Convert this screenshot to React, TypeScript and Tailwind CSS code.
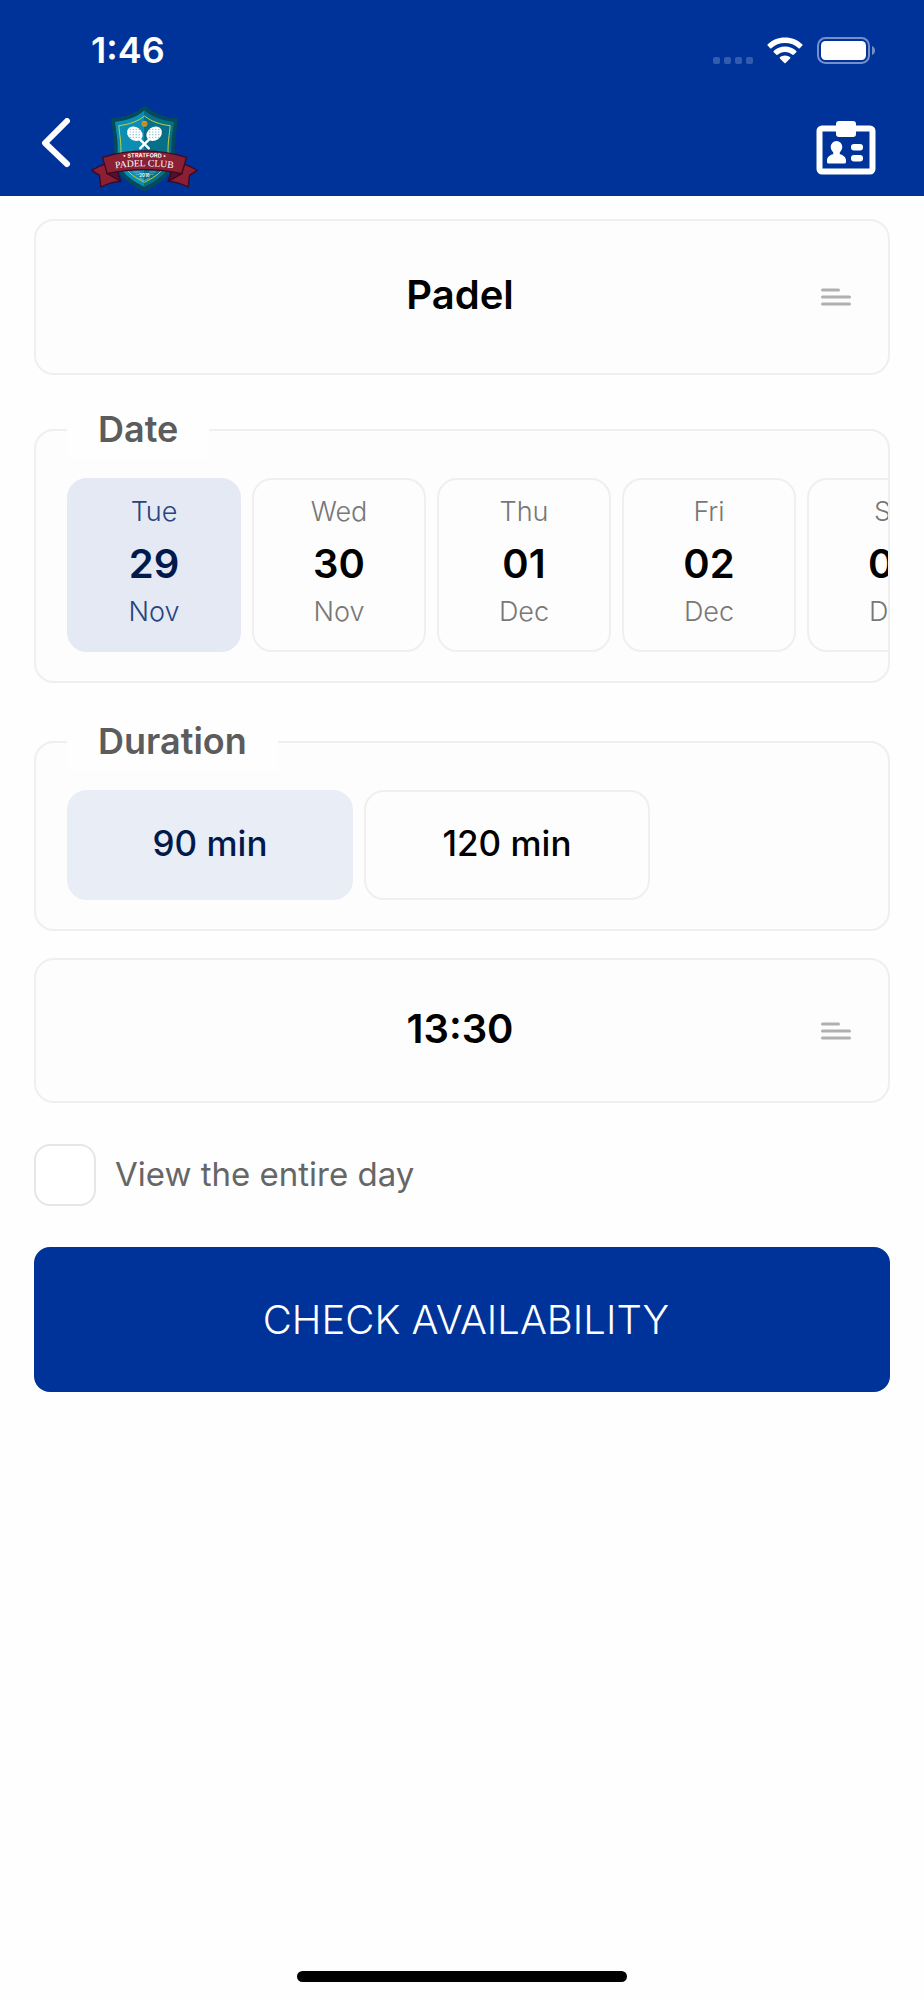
import React, { useState } from "react";
import clsx from "clsx";

const days = [
  { id: 1, weekday: "Tue", day: "29", month: "Nov" },
  { id: 2, weekday: "Wed", day: "30", month: "Nov" },
  { id: 3, weekday: "Thu", day: "01", month: "Dec" },
  { id: 4, weekday: "Fri", day: "02", month: "Dec" },
  { id: 5, weekday: "Sat", day: "03", month: "Dec" },
];

const durations = ["90 min", "120 min"];

const ClubLogo = () => (
  <svg viewBox="32 11 320 261" className="h-[87px] w-[107px]" role="img" aria-label="Stratford Padel Club">
    <path d="M192 12 C165 37 130 51 92 51 C94 88 104 112 101 160 C100 215 145 248 192 270 C239 248 284 215 283 160 C280 112 290 88 292 51 C254 51 219 37 192 12Z" fill="#034b5b" />
    <path d="M192 27 C168 48 138 59 104 61 C106 92 114 116 111 160 C110 207 150 236 192 256Z" fill="#0b8db4" />
    <path d="M192 27 C216 48 246 59 280 61 C278 92 270 116 273 160 C274 207 234 236 192 256Z" fill="#067089" />
    <path d="M192 44 C172 60 145 70 115 73 C117 100 123 125 121 160 C122 202 157 226 192 243 C227 226 262 202 263 160 C261 125 267 100 269 73 C239 70 212 60 192 44Z" fill="none" stroke="#c5cf3c" strokeWidth="3" />
    <circle cx="192" cy="67" r="9" fill="#d39a2a" />
    <path d="M185 64 q7 5 14 0 M185 71 q7 -5 14 0" stroke="#94701f" strokeWidth="1.5" fill="none" />
    <g stroke="#fff" strokeWidth="7" strokeLinecap="round">
      <path d="M178 114 L205 141" />
      <path d="M206 114 L179 141" />
    </g>
    <g fill="#fff">
      <ellipse cx="163" cy="97" rx="25" ry="20" transform="rotate(35 163 97)" />
      <ellipse cx="221" cy="97" rx="25" ry="20" transform="rotate(-35 221 97)" />
    </g>
    <g fill="#5fa9bd">
      {[0, 1, 2, 3].map((row) =>
        [0, 1, 2, 3].map((col) => (
          <React.Fragment key={`${row}-${col}`}>
            <circle cx={149 + col * 9} cy={84 + row * 8} r="1.8" />
            <circle cx={208 + col * 9} cy={84 + row * 8} r="1.8" />
          </React.Fragment>
        ))
      )}
    </g>
    <g stroke="#8fd0dc" strokeWidth="2" fill="none">
      <path d="M158 212 H178 M206 212 H226 M165 219 H177 M207 219 H219 M176 230 L192 238 L208 230" />
    </g>
    <text x="192" y="226" textAnchor="middle" fill="#e8f6f8" fontFamily="Inter, sans-serif" fontWeight="700" fontSize="13">
      2018
    </text>
    <g fill="#8b1f33" stroke="#3b0a20" strokeWidth="4" strokeLinejoin="round">
      <path d="M72 189 C58 193 45 199 34 207 L57 222 L61 257 C80 247 100 241 121 240 L104 208Z" />
      <path d="M312 189 C326 193 339 199 350 207 L327 222 L323 257 C304 247 284 241 263 240 L280 208Z" />
      <path d="M79 216 L121 240 L110 208Z" fill="#55102a" />
      <path d="M305 216 L263 240 L274 208Z" fill="#55102a" />
      <path d="M66 168 Q192 129 318 168 L304 217 Q192 193 80 217Z" />
    </g>
    <path id="club-arc-top" d="M70 178 Q192 157 314 178" fill="none" />
    <path id="club-arc-main" d="M70 206 Q192 184 314 206" fill="none" />
    <text fill="#fff" textAnchor="middle" fontFamily="Inter, sans-serif" fontWeight="700" fontSize="17">
      <textPath href="#club-arc-top" startOffset="50%">• STRATFORD •</textPath>
    </text>
    <text fill="#fff" textAnchor="middle" fontFamily="'Liberation Serif', serif" fontSize="29">
      <textPath href="#club-arc-main" startOffset="50%">PADEL CLUB</textPath>
    </text>
  </svg>
);

const StatusBar = () => (
  <div className="flex h-[100px] items-center justify-between pl-[91px] pr-12">
    <span className="text-4xl font-semibold">1:46</span>
    <div className="flex items-end gap-3.5">
      <div className="flex gap-1">
        {[0, 1, 2, 3].map((i) => (
          <span key={i} className="h-[7px] w-[7px] rounded-xs bg-[#345cae]" />
        ))}
      </div>
      <svg viewBox="0 0 36 27" className="h-[27px] w-9" fill="#fff" aria-hidden="true">
        <path d="M18 0.5 C24.9 0.5 31 3.2 35.4 7.4 Q36 8 35.4 8.6 L32.8 11.2 Q32.2 11.7 31.6 11.2 C28 7.8 23.3 5.9 18 5.9 C12.7 5.9 8 7.8 4.4 11.2 Q3.8 11.7 3.2 11.2 L0.6 8.6 Q0 8 0.6 7.4 C5 3.2 11.1 0.5 18 0.5Z" />
        <path d="M18 9.6 C22.4 9.6 26.4 11.3 29.3 14 Q29.9 14.6 29.3 15.2 L26.6 17.8 Q26.1 18.3 25.5 17.8 C23.5 16 20.9 14.9 18 14.9 C15.1 14.9 12.5 16 10.5 17.8 Q9.9 18.3 9.4 17.8 L6.7 15.2 Q6.1 14.6 6.7 14 C9.6 11.3 13.6 9.6 18 9.6Z" />
        <path d="M18 18.4 C20 18.4 21.8 19.1 23.1 20.2 Q23.7 20.8 23.1 21.4 L18.6 26 Q18 26.6 17.4 26 L12.9 21.4 Q12.3 20.8 12.9 20.2 C14.2 19.1 16 18.4 18 18.4Z" />
      </svg>
      <svg viewBox="0 0 59 27" className="h-[27px] w-[59px]" aria-hidden="true">
        <rect x="1" y="1" width="51" height="25" rx="7.5" fill="none" stroke="#7590c8" strokeWidth="2" />
        <rect x="4" y="4" width="45" height="19" rx="4.5" fill="#fff" />
        <path d="M55 9 Q58 10.5 58 13.5 Q58 16.5 55 18Z" fill="#7590c8" />
      </svg>
    </div>
  </div>
);

const NavBar = () => (
  <nav className="flex h-24 items-center justify-between pl-[41px] pr-12">
    <div className="flex items-center gap-5">
      <button type="button" aria-label="Back">
        <svg viewBox="0 0 30 60" className="h-[60px] w-[30px]" fill="none" stroke="#fff" strokeWidth="6" strokeLinecap="round" strokeLinejoin="round">
          <path d="M26 3 L4 25 L26 46" />
        </svg>
      </button>
      <ClubLogo />
    </div>
    <button type="button" aria-label="Membership card">
      <svg viewBox="0 0 60 56" className="h-14 w-[60px]" fill="#fff">
        <rect x="3.5" y="8.5" width="53" height="43" rx="2.5" fill="none" stroke="#fff" strokeWidth="6" />
        <rect x="20" y="1" width="20" height="16" rx="3" />
        <path d="M20.500 21 a5.800 5.800 0 0 1 5.800 5.800 c0 2.500 -1.300 4.200 -2.500 5.500 v2 c3.500 0.600 6.200 3 6.200 6.200 v1.500 q0 1.500 -1.500 1.500 h-16 q-1.500 0 -1.500 -1.500 v-1.500 c0 -3.200 2.700 -5.600 6.200 -6.200 v-2 c-1.200 -1.300 -2.500 -3 -2.500 -5.500 a5.800 5.800 0 0 1 5.800 -5.800Z" />
        <rect x="35" y="24" width="12" height="6.500" rx="3" />
        <rect x="35" y="35" width="12" height="6.500" rx="3" />
      </svg>
    </button>
  </nav>
);

interface PickerProps {
  label: string;
  options: string[];
  className?: string;
}

const Picker = ({ label, options, className }: PickerProps) => (
  <div className={clsx("grid items-center rounded-[20px] border-2 border-[#efefef] bg-[#fdfdfd]", className)}>
    <select
      aria-label={label}
      className="col-start-1 row-start-1 h-full w-full appearance-none bg-transparent pr-1 pb-1 text-center text-[40px] font-semibold text-black [text-align-last:center]"
    >
      {options.map((option) => (
        <option key={option}>{option}</option>
      ))}
    </select>
    <svg viewBox="0 0 30 18" className="pointer-events-none col-start-1 row-start-1 mr-[37px] h-[18px] w-[30px] justify-self-end" stroke="#b0b0b0" strokeWidth="3" strokeLinecap="round" aria-hidden="true">
      <path d="M1.500 2 H17.500 M1.500 9 H28.500 M1.500 16 H28.500" />
    </svg>
  </div>
);

interface GroupProps {
  title: string;
  children: React.ReactNode;
}

const Group = ({ title, children }: GroupProps) => (
  <fieldset className="min-w-0 rounded-[20px] border-2 border-[#efefef] bg-[#fdfdfd] pt-[18px] pb-[29px] pl-[31px]">
    <legend className="bg-[#fefefe] px-[31px] pb-0.5 text-4xl leading-[58px] font-semibold text-[#5c5c5c]">{title}</legend>
    <div className="flex gap-[11px] overflow-hidden">{children}</div>
  </fieldset>
);

const App = () => {
  const [day, setDay] = useState(1);
  const [duration, setDuration] = useState("90 min");

  return (
    <div className="flex min-h-screen flex-col bg-[#fefefe] font-['Inter','Liberation_Sans',sans-serif]">
      <header className="bg-[#003399] text-white">
        <StatusBar />
        <NavBar />
      </header>

      <main className="flex flex-col px-[34px] pt-[23px]">
        <Picker label="Sport" options={["Padel", "Tennis"]} className="mb-[25px] h-[156px]" />

        <Group title="Date">
          {days.map((item) => (
            <button
              key={item.id}
              type="button"
              aria-pressed={day === item.id}
              onClick={() => setDay(item.id)}
              className={clsx(
                "flex h-[174px] w-[174px] shrink-0 flex-col items-center rounded-[20px] border-2 pt-3 text-[27px] font-light",
                day === item.id ? "border-[#e5e9f4] bg-[#e5e9f4] text-[#264480]" : "border-[#efefef] text-[#777777]"
              )}
            >
              <span className="leading-10">{item.weekday}</span>
              <span className={clsx("text-[40px] leading-[64px] font-semibold", day === item.id ? "text-[#001a4d]" : "text-black")}>
                {item.day}
              </span>
              <span className="leading-8">{item.month}</span>
            </button>
          ))}
        </Group>

        <div className="mt-[29px] mb-[27px]">
          <Group title="Duration">
            {durations.map((item) => (
              <button
                key={item}
                type="button"
                aria-pressed={duration === item}
                onClick={() => setDuration(item)}
                className={clsx(
                  "h-[110px] w-[286px] rounded-[20px] border-2 pb-1 text-[35px] font-medium",
                  duration === item ? "border-[#e9edf6] bg-[#e9edf6] text-[#001a4d]" : "border-[#efefef] text-black"
                )}
              >
                {item}
              </button>
            ))}
          </Group>
        </div>

        <Picker label="Time" options={["13:30", "14:00", "14:30"]} className="h-[145px]" />

        <label className="my-[41px] flex items-center gap-[19px] text-[33px] text-[#666666]">
          <input
            type="checkbox"
            className="h-[62px] w-[62px] appearance-none rounded-2xl border-2 border-[#e6e6e6] bg-white checked:bg-[#003399]"
          />
          View the entire day
        </label>

        <button type="button" className="h-[145px] rounded-2xl bg-[#003399] pl-2 text-[40px] font-light text-white">
          CHECK AVAILABILITY
        </button>
      </main>

      <div className="mt-auto mb-[18px] h-[11px] w-[330px] self-center rounded-full bg-black" />
    </div>
  );
};

export default App;
